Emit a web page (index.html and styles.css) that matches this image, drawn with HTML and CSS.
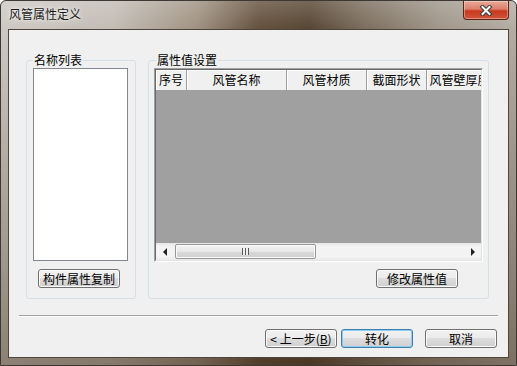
FILE: index.html
```html
<!DOCTYPE html>
<html lang="zh-CN">
<head>
  <meta charset="UTF-8" />
  <title>风管属性定义</title>
  <link rel="stylesheet" href="styles.css">
</head>
<body>
  <div class="window">
    <div class="titlebar">
      <span class="title">风管属性定义</span>
      <button class="close-btn">
        <svg width="14" height="11" viewBox="0 0 14 11">
          <path d="M3.5 2 L10.5 9 M10.5 2 L3.5 9" stroke="#3b3b3b" stroke-width="4" stroke-linecap="square" fill="none"/>
          <path d="M3.5 2 L10.5 9 M10.5 2 L3.5 9" stroke="#fff" stroke-width="2" stroke-linecap="square" fill="none"/>
        </svg>
      </button>
    </div>

    <div class="client">
      <div class="groups">
        <div class="group group-names">
          <span class="group-label">名称列表</span>
          <div class="listbox"></div>
          <button class="btn btn-copy">构件属性复制</button>
        </div>

        <div class="group group-props">
          <span class="group-label">属性值设置</span>
          <div class="grid">
            <div class="grid-inner">
              <div class="grid-header">
                <div class="col col-no">序号</div>
                <div class="col col-name">风管名称</div>
                <div class="col col-material">风管材质</div>
                <div class="col col-shape">截面形状</div>
                <div class="col col-thick">风管壁厚度</div>
              </div>
              <div class="grid-body"></div>
              <div class="hscroll">
                <div class="arrow-btn"><span class="arrow-left"></span></div>
                <div class="track"><div class="thumb"><span class="grip"></span></div></div>
                <div class="arrow-btn"><span class="arrow-right"></span></div>
              </div>
            </div>
          </div>
          <button class="btn btn-edit">修改属性值</button>
        </div>
      </div>

      <div class="separator"></div>

      <div class="footer">
        <button class="btn">&lt; 上一步(<u>B</u>)</button>
        <button class="btn btn-default">转化</button>
        <button class="btn btn-cancel">取消</button>
      </div>
    </div>
  </div>
</body>
</html>
```

FILE: styles.css
```css
body {
  margin: 0;
  font-family: "Noto Sans CJK SC", "Liberation Sans", sans-serif;
  font-size: 12px;
  color: #000;
  background: #fff;
}

.window {
  width: 517px;
  height: 366px;
  box-sizing: border-box;
  border: 1px solid #3d3833;
  border-radius: 6px 6px 0 0;
  display: flex;
  flex-direction: column;
  background:
    linear-gradient(to bottom, rgba(255,255,255,0.18) 0, rgba(255,255,255,0) 28px, rgba(60,40,20,0.45) 100%),
    linear-gradient(to right, #cdc9c3 0%, #c2bcb4 22%, #a09282 38%, #64513d 50%, #574633 60%, #7a6c5c 70%, #a0968a 85%, #b4ada4 100%);
}

.titlebar {
  height: 28px;
  display: flex;
  justify-content: space-between;
  align-items: flex-start;
}

.title {
  margin: 5px 0 0 8px;
  line-height: 16px;
  color: #1a1a1a;
  text-shadow: 0 0 6px rgba(255,255,255,0.9), 0 0 3px rgba(255,255,255,0.8);
}

.close-btn {
  width: 46px;
  height: 19px;
  margin-right: 7px;
  padding: 0;
  border: 1px solid #5a2518;
  border-top: none;
  border-radius: 0 0 4px 4px;
  background: linear-gradient(to bottom, #e9a99a 0%, #dc7f6b 45%, #c7391f 55%, #d0553b 100%);
  box-shadow: inset 0 0 0 1px rgba(255,255,255,0.35);
  display: flex;
  align-items: center;
  justify-content: center;
}

.client {
  flex: 1;
  margin: 0 7px 7px 7px;
  box-sizing: border-box;
  border: 1px solid #4e463d;
  background: #f0f0f0;
  display: flex;
  flex-direction: column;
}

.groups {
  display: flex;
  gap: 12px;
  padding: 30px 0 0 17px;
}

.group {
  box-sizing: border-box;
  height: 239px;
  border: 1px solid #d5dfe5;
  border-radius: 3px;
  display: flex;
  flex-direction: column;
}

.group-label {
  align-self: flex-start;
  margin-top: -8px;
  padding: 0 1px;
  line-height: 14px;
  background: #f0f0f0;
}

.group-names {
  width: 110px;
  padding: 0 6px;
}

.group-props {
  width: 341px;
  padding: 0 4px 0 5px;
}

.group-props .group-label {
  margin-left: 2px;
}

.listbox {
  margin-top: 1px;
  width: 95px;
  height: 193px;
  box-sizing: border-box;
  background: #fff;
  border: 1px solid #828790;
}

.btn {
  height: 19px;
  padding: 0;
  box-sizing: border-box;
  font-family: inherit;
  font-size: 12px;
  line-height: 16px;
  color: #000;
  border: 1px solid #707070;
  border-radius: 3px;
  background: linear-gradient(to bottom, #f2f2f2 0%, #ebebeb 50%, #dddddd 50%, #cfcfcf 100%);
  box-shadow: inset 0 0 0 1px #fcfcfc;
}

.btn-copy {
  width: 82px;
  margin: 8px 0 0 5px;
}

.btn-edit {
  width: 82px;
  margin: 7px 26px 0 0;
  align-self: flex-end;
}

.grid {
  margin-top: 1px;
  width: 329px;
  height: 194px;
  box-sizing: border-box;
  border: 1px solid;
  border-color: #a0a0a0 #fff #fff #a0a0a0;
}

.grid-inner {
  height: 100%;
  box-sizing: border-box;
  border: 1px solid;
  border-color: #696969 #e3e3e3 #e3e3e3 #696969;
  display: flex;
  flex-direction: column;
  overflow: hidden;
}

.grid-header {
  display: flex;
  height: 21px;
  flex-shrink: 0;
  overflow: hidden;
}

.col {
  flex-shrink: 0;
  box-sizing: border-box;
  height: 21px;
  line-height: 20px;
  text-align: center;
  white-space: nowrap;
  overflow: hidden;
  background: #f0f0f0;
  border-right: 1px solid #a0a0a0;
  border-bottom: 1px solid #a0a0a0;
  box-shadow: inset 1px 1px #fff;
}

.col-no { width: 31px; }
.col-name { width: 100px; }
.col-material { width: 80px; }
.col-shape { width: 60px; }
.col-thick { width: 66px; }

.grid-body {
  flex: 1;
  background: #a0a0a0;
}

.hscroll {
  height: 17px;
  flex-shrink: 0;
  display: flex;
  background: linear-gradient(to bottom, #e5e5e5 0%, #f3f3f3 20%, #f3f3f3 80%, #e9e9e9 100%);
}

.arrow-btn {
  width: 17px;
  display: flex;
  align-items: center;
  justify-content: center;
}

.arrow-left,
.arrow-right {
  width: 0;
  height: 0;
  border-top: 4px solid transparent;
  border-bottom: 4px solid transparent;
}

.arrow-left { border-right: 4px solid #222; }
.arrow-right { border-left: 4px solid #222; }

.track {
  flex: 1;
  display: flex;
  align-items: center;
}

.thumb {
  margin-left: 2px;
  width: 141px;
  height: 15px;
  box-sizing: border-box;
  border: 1px solid #979797;
  border-radius: 2px;
  background: linear-gradient(to bottom, #f4f4f4 0%, #e8e8e8 50%, #d9d9d9 51%, #d0d0d0 100%);
  box-shadow: inset 0 0 0 1px #fafafa;
  display: flex;
  align-items: center;
  justify-content: center;
}

.grip {
  width: 7px;
  height: 7px;
  background: repeating-linear-gradient(to right, #5a5a5a 0 1px, #f0f0f0 1px 3px);
}

.separator {
  margin: 16px 10px 0 10px;
  border-top: 1px solid #a0a0a0;
  border-bottom: 1px solid #fff;
}

.footer {
  display: flex;
  justify-content: flex-end;
  gap: 4px;
  padding: 12px 11px 0 0;
}

.footer .btn {
  width: 72px;
}

.btn-default {
  border-color: #3c7fb1;
  box-shadow: inset 0 0 0 1px #8fcdf0;
}

.footer .btn-cancel {
  margin-left: 8px;
}
```
